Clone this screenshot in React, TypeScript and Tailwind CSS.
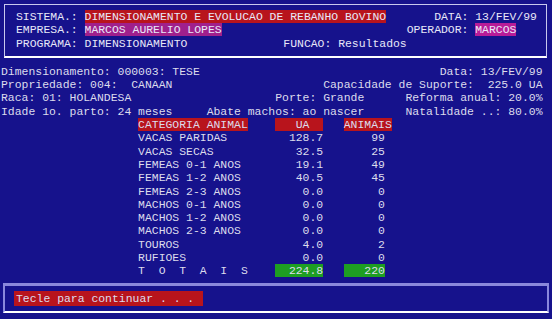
const pad = (n: number) => ' '.repeat(n)

const rows: [string, string, string][] = [
  ['VACAS PARIDAS', '128.7', '99'],
  ['VACAS SECAS', '32.5', '25'],
  ['FEMEAS 0-1 ANOS', '19.1', '49'],
  ['FEMEAS 1-2 ANOS', '40.5', '45'],
  ['FEMEAS 2-3 ANOS', '0.0', '0'],
  ['MACHOS 0-1 ANOS', '0.0', '0'],
  ['MACHOS 1-2 ANOS', '0.0', '0'],
  ['MACHOS 2-3 ANOS', '0.0', '0'],
  ['TOUROS', '4.0', '2'],
  ['RUFIOES', '0.0', '0'],
]

function Line({ children }: { children: React.ReactNode }) {
  return <div className="h-[13.3px] whitespace-pre">{children}</div>
}

export default function App() {
  return (
    <div
      className="w-[552px] h-[319px] overflow-hidden bg-[#16128c] text-[#dcdcec] text-[11.43px] leading-[13.3px]"
      style={{ fontFamily: '"Liberation Mono", monospace' }}
    >
      {/* cabecalho */}
      <div className="ml-[4px] mt-[4px] w-[543px] border border-[#c8c8ee] border-b-2 border-b-white pl-[11px] pt-[5px] pb-[6px] text-[#e8e8f8]">
        <Line>
          {'SISTEMA.: '}
          <span className="bg-[#b8141c]">DIMENSIONAMENTO E EVOLUCAO DE REBANHO BOVINO</span>
          {pad(7)}DATA: 13/FEV/99
        </Line>
        <Line>
          {'EMPRESA.: '}
          <span className="bg-[#a0208c]">MARCOS AURELIO LOPES</span>
          {pad(27)}OPERADOR: <span className="bg-[#b81c98]">MARCOS</span>
        </Line>
        <Line>
          {'PROGRAMA: DIMENSIONAMENTO'}
          {pad(14)}FUNCAO: Resultados
        </Line>
      </div>

      {/* dados */}
      <div className="pl-[1px] mt-[7px]">
        <Line>{'Dimensionamento: 000003: TESE'.padEnd(64)}Data: 13/FEV/99</Line>
        <Line>{'Propriedade: 004:  CANAAN'.padEnd(47)}Capacidade de Suporte:  225.0 UA</Line>
        <Line>
          {'Raca: 01: HOLANDESA'.padEnd(40)}
          {'Porte: Grande'.padEnd(19)}Reforma anual: 20.0%
        </Line>
        <Line>
          {'Idade 1o. parto: 24 meses'.padEnd(30)}
          {'Abate machos: ao nascer'.padEnd(29)}Natalidade ..: 80.0%
        </Line>
        <Line>
          {pad(20)}
          <span className="bg-[#b8141c]">CATEGORIA ANIMAL</span>
          {pad(4)}
          <span className="bg-[#b8141c]">{'   UA  '}</span>
          {pad(3)}
          <span className="bg-[#b8141c]">ANIMAIS</span>
        </Line>
        {rows.map(([label, ua, n]) => (
          <Line key={label}>
            {pad(20) + label.padEnd(20) + ua.padStart(7) + n.padStart(9)}
          </Line>
        ))}
        <Line>
          {pad(20) + 'T  O  T  A  I  S'.padEnd(20)}
          <span className="bg-[#1e9e22]">{'224.8'.padStart(7)}</span>
          {pad(3)}
          <span className="bg-[#1e9e22]">{'220'.padStart(6)}</span>
        </Line>
      </div>

      {/* rodape */}
      <div className="ml-[3px] mt-[5px] w-[546px] h-[30px] border-t-[3px] border-x-2 border-[#8a88dc] border-b-2 border-b-white pl-[9px] pt-[6px]">
        <span className="whitespace-pre bg-[#b8141c] px-[2px] py-[1px]">Tecle para continuar . . . </span>
      </div>
    </div>
  )
}
